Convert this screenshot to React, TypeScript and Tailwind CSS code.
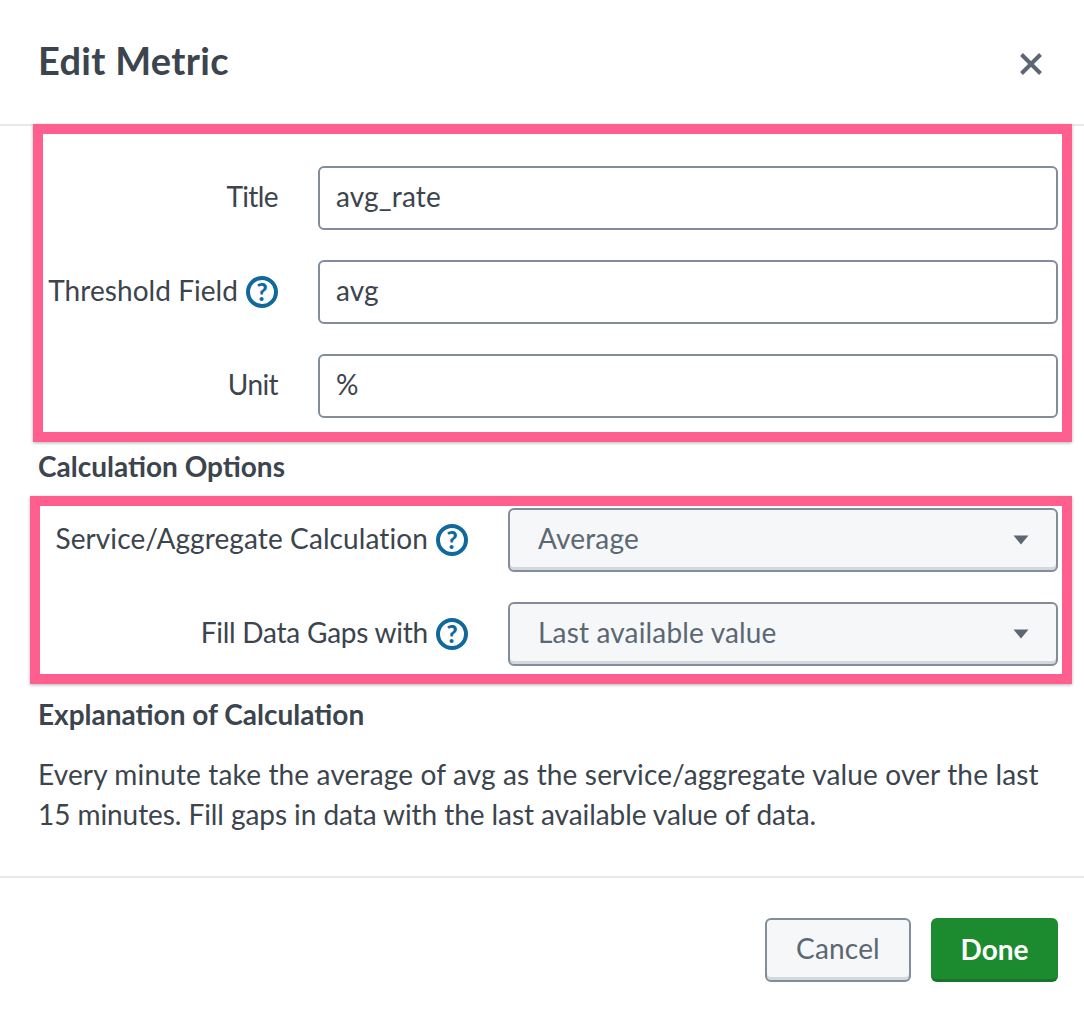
import React from "react";

const font = { fontFamily: '"Lato", "Open Sans", sans-serif' };

function Help() {
  return (
    <span className="ml-2 flex h-8 w-8 shrink-0 items-center justify-center rounded-full border-4 border-[#10699c] text-[24px] font-black leading-none text-[#10699c]">
      ?
    </span>
  );
}

function Field({ label, value, help, tight }: { label: string; value: string; help?: boolean; tight?: boolean }) {
  return (
    <div className="flex h-16 items-center">
      <div className="flex w-[230px] shrink-0 items-center justify-end whitespace-nowrap text-[28px] text-[#3c444d]">
        <span className={tight ? "-mt-[4px] tracking-[-0.6px]" : "-mt-[4px] tracking-[0.05px]"}>{label}</span>
        {help && <Help />}
      </div>
      <div className="ml-10 flex h-16 flex-1 items-center rounded-md border-2 border-[#818d99] bg-white px-4 text-[28px] tracking-[0.17px] text-[#3c444d]">
        <span className="-mt-[4px]">{value}</span>
      </div>
    </div>
  );
}

function SelectRow({ label, value, tight }: { label: string; value: string; tight?: boolean }) {
  return (
    <div className="flex h-16 items-center">
      <div className="flex w-[428px] shrink-0 items-center justify-end whitespace-nowrap text-[28px] text-[#3c444d]">
        <span className={tight ? "-mt-[4px] tracking-[-0.23px]" : "-mt-[4px] tracking-[0.1px]"}>{label}</span>
        <Help />
      </div>
      <div className="ml-10 flex h-16 flex-1 items-center justify-between rounded-md border-2 border-[#818d99] bg-[#f5f7f9] pl-7 pr-[27px] text-[28px] tracking-[0.17px] text-[#5c6773] shadow-[inset_0_-3px_0_#d3d8de]">
        <span className="-mt-[4px]">{value}</span>
        <svg width="16" height="10" viewBox="0 0 16 10">
          <path d="M0.5 0.5 H15.5 L8 9.5 Z" fill="#5c6773" />
        </svg>
      </div>
    </div>
  );
}

export default function App() {
  return (
    <div className="flex h-[1018px] w-[1084px] flex-col overflow-hidden bg-white" style={font}>
      <header className="flex h-[126px] shrink-0 items-start justify-between border-b-2 border-[#e6e8ea] pl-[38px] pr-[41px]">
        <h1 className="mt-[37px] text-[38px] font-bold leading-[46px] tracking-[0.3px] text-[#3c444d]">Edit Metric</h1>
        <svg className="mt-[52px]" width="24" height="24" viewBox="0 0 24 24">
          <path d="M2.5 2.5 L21.5 21.5 M21.5 2.5 L2.5 21.5" stroke="#5c6773" strokeWidth="4" fill="none" />
        </svg>
      </header>

      <section className="z-10 -mt-[2px] ml-[33px] flex h-[318px] w-[1039px] shrink-0 flex-col gap-[30px] border-10 border-[#fe5f8f] pl-[5px] pr-[4px] pt-[32px] shadow-[0_1px_3px_rgba(0,0,0,0.3)]">
        <Field label="Title" value="avg_rate" tight />
        <Field label="Threshold Field" value="avg" help />
        <Field label="Unit" value="%" tight />
      </section>

      <h2 className="ml-[38px] h-[50px] text-[28px] font-bold leading-[48px] text-[#3c444d]">Calculation Options</h2>

      <section className="ml-[30px] mt-[4px] flex h-[188px] w-[1042px] shrink-0 flex-col gap-[30px] border-10 border-[#fe5f8f] pr-[4px] pt-[2px] shadow-[0_1px_3px_rgba(0,0,0,0.3)]">
        <SelectRow label="Service/Aggregate Calculation" value="Average" />
        <SelectRow label="Fill Data Gaps with" value="Last available value" tight />
      </section>

      <h2 className="ml-[38px] mt-[12px] text-[28px] font-bold leading-[36px] text-[#3c444d]">Explanation of Calculation</h2>

      <p className="ml-[38px] mr-[40px] mt-[22px] text-[28px] leading-[40px] text-[#3c444d]">
        <span className="block whitespace-nowrap tracking-[0.15px]">Every minute take the average of avg as the service/aggregate value over the last</span>
        <span className="block whitespace-nowrap tracking-[-0.07px]">15 minutes. Fill gaps in data with the last available value of data.</span>
      </p>

      <footer className="mt-[42px] flex flex-1 items-start justify-end gap-5 border-t-2 border-[#e6e8ea] pr-[26px] pt-[40px]">
        <button className="flex h-16 w-[146px] items-center justify-center rounded-md border-2 border-[#818d99] bg-[#f5f7f9] text-[28px] tracking-[0.17px] text-[#5c6773] shadow-[inset_0_-3px_0_#d3d8de]">
          <span className="-mt-[4px]">Cancel</span>
        </button>
        <button className="flex h-16 w-[127px] items-center justify-center rounded-md border-b-[3px] border-[#17752a] bg-[#1c8a2e] text-[28px] font-bold text-white">
          Done
        </button>
      </footer>
    </div>
  );
}
